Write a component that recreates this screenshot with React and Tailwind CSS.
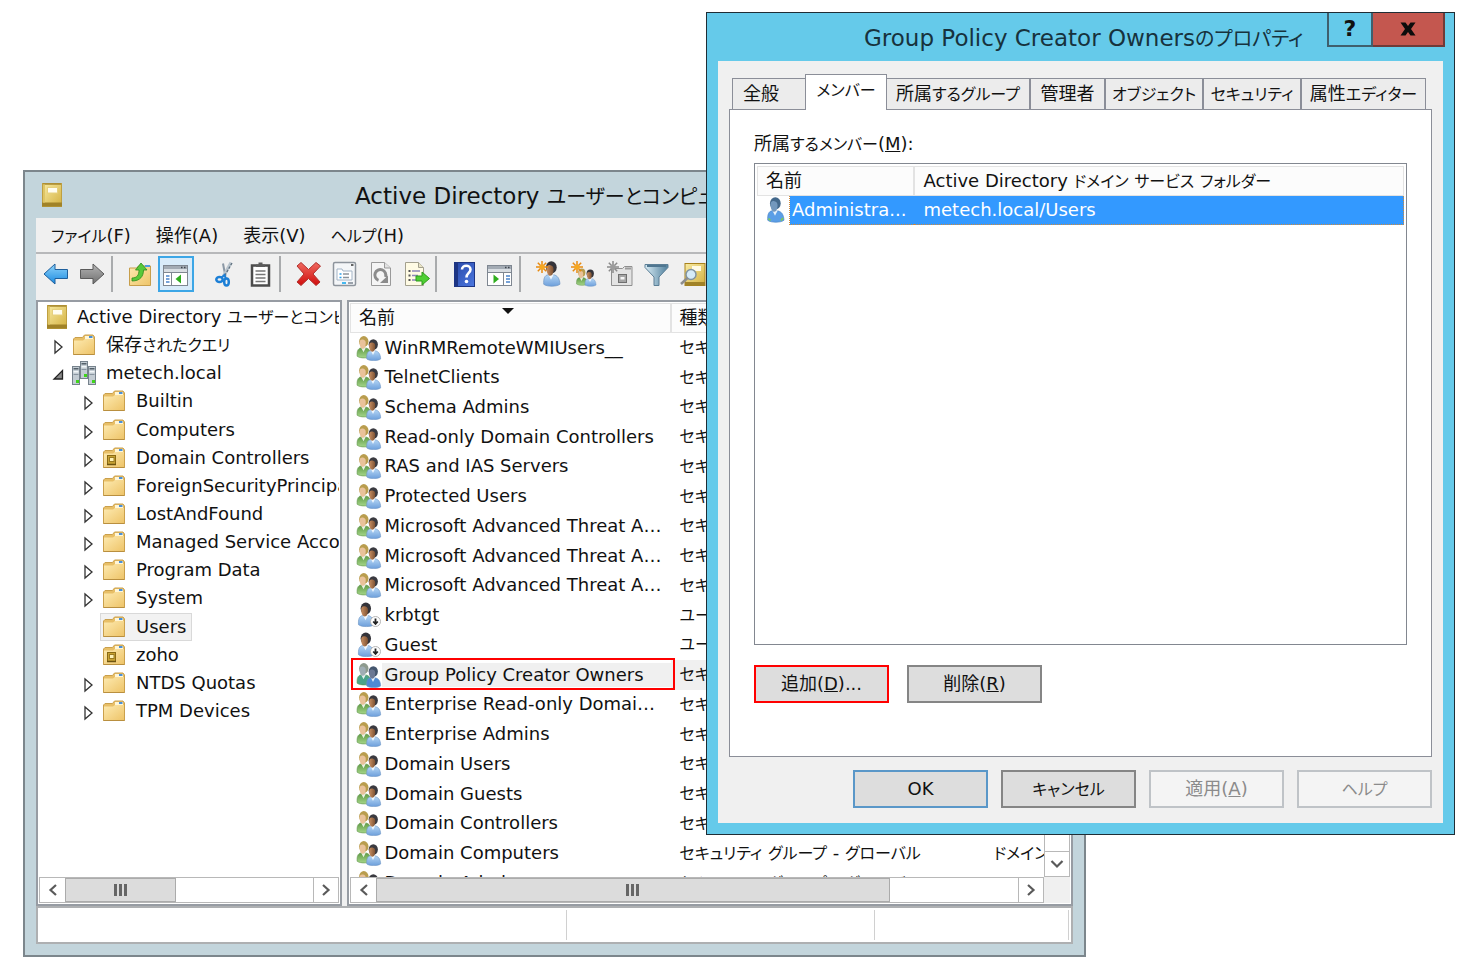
import React from "react";

const FONT = "font-['DejaVu_Sans','Noto_Sans_CJK_JP',sans-serif] [font-feature-settings:'palt']";

// Kana runs are set a step smaller than the Latin and kanji around them.
function Jp({ text, kana = "text-[16px]" }) {
  return text.split(/([\u3040-\u30ff]+)/).map((part, i) =>
    i % 2 ? (
      <span key={i} className={kana}>
        {part}
      </span>
    ) : (
      part
    )
  );
}

function Defs() {
  return (
    <svg className="absolute h-0 w-0" aria-hidden="true">
      <defs>
        <linearGradient id="folder" x1="0" y1="0" x2="1" y2="1">
          <stop offset="0" stopColor="#fdeab0" />
          <stop offset="1" stopColor="#eec469" />
        </linearGradient>
        <linearGradient id="gold" x1="0" y1="0" x2="1" y2="1">
          <stop offset="0" stopColor="#f8eba2" />
          <stop offset="1" stopColor="#d3b040" />
        </linearGradient>
        <linearGradient id="blueArrow" x1="0" y1="0" x2="0" y2="1">
          <stop offset="0" stopColor="#8fd4fb" />
          <stop offset="1" stopColor="#1a8ae0" />
        </linearGradient>
        <linearGradient id="grayArrow" x1="0" y1="0" x2="0" y2="1">
          <stop offset="0" stopColor="#b4b4b4" />
          <stop offset="1" stopColor="#707070" />
        </linearGradient>
        <linearGradient id="redX" x1="0" y1="0" x2="0" y2="1">
          <stop offset="0" stopColor="#f06a60" />
          <stop offset="1" stopColor="#d00c0c" />
        </linearGradient>
        <linearGradient id="blueBody" x1="0" y1="0" x2="0" y2="1">
          <stop offset="0" stopColor="#b5d6f5" />
          <stop offset="1" stopColor="#6d9fdb" />
        </linearGradient>
        <linearGradient id="greenBody" x1="0" y1="0" x2="0" y2="1">
          <stop offset="0" stopColor="#5f9a45" />
          <stop offset="1" stopColor="#a5d689" />
        </linearGradient>
        <linearGradient id="skin" x1="0" y1="0" x2="1" y2="0">
          <stop offset="0" stopColor="#c98f62" />
          <stop offset="1" stopColor="#7d5233" />
        </linearGradient>
        <linearGradient id="steel" x1="0" y1="0" x2="1" y2="0">
          <stop offset="0" stopColor="#d9ecf5" />
          <stop offset="1" stopColor="#4f7f9c" />
        </linearGradient>
        <linearGradient id="helpBlue" x1="0" y1="0" x2="1" y2="1">
          <stop offset="0" stopColor="#2748a8" />
          <stop offset="1" stopColor="#4d78e0" />
        </linearGradient>
      </defs>
    </svg>
  );
}

function BookIcon() {
  return (
    <svg width="20" height="24" viewBox="0 0 20 24" className="shrink-0" aria-hidden="true">
      <rect x="0.5" y="0.5" width="19" height="23" fill="url(#gold)" stroke="#bfa040" />
      <path d="M1 1h18" stroke="#a88a30" strokeWidth="1.5" />
      <rect x="0" y="19.500" width="20" height="4" fill="#a08228" />
      <rect x="1" y="1.500" width="2" height="18" fill="#dfc566" />
      <rect x="5.500" y="4.500" width="10" height="5.500" fill="#fffdf0" stroke="#e6d07e" />
    </svg>
  );
}

function FolderIcon({ ou }) {
  return (
    <svg width="24" height="22" viewBox="0 0 24 22" className="shrink-0" aria-hidden="true">
      <path d="M1.500 5l1.500-1.500h7.500l2-2.500h8.500l1.500 2v17.500H1.500z" fill="#e8bf67" stroke="#caa04c" />
      <rect x="13" y="2" width="8" height="3" fill="#fff6d8" />
      <rect x="17" y="2" width="3.500" height="2" fill="#4a90d8" />
      <path d="M2 6.500h9l2-1.500h9V20H2z" fill="url(#folder)" />
      <path d="M1.500 20.500h21" stroke="#b98f3f" />
      {ou && (
        <g>
          <rect x="5.500" y="8.500" width="8" height="9" fill="#c8a233" stroke="#8a6a14" />
          <path d="M5 17.500h9" stroke="#6e5410" strokeWidth="1.500" />
          <rect x="7.500" y="10.500" width="4.500" height="4" fill="#fff3b8" stroke="#9a7a22" />
        </g>
      )}
    </svg>
  );
}

function DomainIcon() {
  const tower = (x, y, h) => (
    <g key={x}>
      <rect x={x + 0.5} y={y + 0.5} width="7" height={h} fill="#c3ccd3" stroke="#76828c" />
      <rect x={x + 1.5} y={y + 2} width="5" height="1.500" fill="#54606a" />
      <rect x={x + 1.5} y={y + 5} width="5" height="1.500" fill="#f2f6f8" />
      <rect x={x + 1.5} y={y + 8} width="5" height="1" fill="#8995a0" />
      <rect x={x + 4} y={y + h - 4} width="3" height="3" fill="#3fd51a" />
    </g>
  );
  return (
    <svg width="24" height="24" viewBox="0 0 24 24" className="shrink-0" aria-hidden="true">
      {tower(8, 0, 17)}
      {tower(0, 5, 18)}
      {tower(16, 5, 18)}
    </svg>
  );
}

function Person({ body = "url(#blueBody)", hair = "#34343a", face = "url(#skin)", edge = "#6b93c4" }) {
  return (
    <g>
      <path d="M-6.500 14.500c-.3-4.500 .5-8 4-8.500h4.500c3.800 .5 5.800 3.500 6 8.500-2.500 2.200-11.500 2.500-14.500 0z" fill={body} stroke={edge} strokeWidth="0.6" />
      <path d="M-2.500 5.500l2.500 5 2.500-5z" fill="#fff" fillOpacity="0.85" />
      <ellipse cx="0.300" cy="-0.500" rx="4.800" ry="5.500" fill={hair} />
      <path d="M-4 0.500c0-2.500 1.500-3.500 3.500-3 1.800 .4 2.800 1.500 2.800 3.500 0 3.500-1 6-3 6s-3.300-3-3.300-6.500z" fill={face} />
    </g>
  );
}

function GroupIcon({ selected }) {
  return (
    <svg width="26" height="26" viewBox="0 0 26 26" className="shrink-0" aria-hidden="true">
      <g transform="translate(7.500 7) scale(0.980)">
        <Person
          body={selected ? "#4ba389" : "url(#greenBody)"}
          hair={selected ? "#8e9a8e" : "#b99d4e"}
          face={selected ? "#a0aeb4" : "#e9c29a"}
          edge="#5b8f45"
        />
      </g>
      <g transform="translate(17 10) scale(0.960)">
        <Person
          body={selected ? "#4f8ad2" : "url(#blueBody)"}
          hair={selected ? "#45566e" : "#3a3a40"}
          face={selected ? "#6b7894" : "url(#skin)"}
        />
      </g>
    </svg>
  );
}

function UserIcon() {
  return (
    <svg width="26" height="26" viewBox="0 0 26 26" className="shrink-0" aria-hidden="true">
      <g transform="translate(9.500 7) scale(1.080)">
        <Person />
      </g>
      <circle cx="19.500" cy="19.500" r="5" fill="#fff" stroke="#b5b5b5" />
      <path d="M19.500 16.500v5M17.200 19.500l2.300 2.500 2.300-2.500" fill="none" stroke="#222" strokeWidth="1.800" />
    </svg>
  );
}

function SelectedUserIcon() {
  return (
    <svg width="20" height="26" viewBox="0 0 20 26" className="shrink-0" aria-hidden="true">
      <g transform="translate(9 7) scale(1.120)">
        <Person body="#5b9ee6" hair="#44698c" face="#7398bd" edge="#4c86c8" />
      </g>
      <path d="M2.500 21.500l2 2M17 21l-2 2.500" stroke="#7ed04a" strokeWidth="1.500" />
    </svg>
  );
}

function Burst({ fill = "#f6a821", stroke = "#e88a10" }) {
  return (
    <g stroke={stroke} strokeWidth="1.500">
      <path d="M6 0v12M0 6h12M1.800 1.800l8.400 8.400M10.200 1.800l-8.400 8.400" />
      <circle cx="6" cy="6" r="2.600" fill={fill} stroke="none" />
    </g>
  );
}

function Svg({ children }) {
  return (
    <svg width="28" height="28" viewBox="0 0 28 28" aria-hidden="true">
      {children}
    </svg>
  );
}

function MiniWindow({ right }) {
  return (
    <g>
      <rect x="1.500" y="5.500" width="24" height="20" fill="#fff" stroke="#7f8791" />
      <rect x="2" y="6" width="23" height="3" fill="#a3abb4" />
      <path d="M19 7.500h1.500M22 7.500h1.500" stroke="#3d444c" strokeWidth="1.500" />
      <rect x="2" y="9" width="23" height="3" fill="#d9dee3" />
      <path d="M1.500 12.500h24" stroke="#7f8791" />
      {right ? (
        <g>
          <path d="M17.500 12.500v13" stroke="#7f8791" />
          <path d="M20 16h4M20 19h4M20 22h4" stroke="#4a84cc" strokeWidth="1.500" />
          <path d="M7.500 14.500l5.500 4.500-5.500 4.500z" fill="#2fae1e" />
        </g>
      ) : (
        <g>
          <path d="M9.500 12.500v13" stroke="#7f8791" />
          <path d="M4 16h3.500M4 19h3.500M4 22h3.500" stroke="#4a84cc" strokeWidth="1.500" />
          <path d="M19 14.500l-5.500 4.500 5.500 4.500z" fill="#2fae1e" />
        </g>
      )}
    </g>
  );
}

const icons = {
  back: (
    <Svg>
      <path d="M2 14L13 4v5.500h12.500v9H13V24z" fill="url(#blueArrow)" stroke="#1e5f9c" strokeLinejoin="round" />
    </Svg>
  ),
  forward: (
    <Svg>
      <path d="M26 14L15 4v5.500H2.500v9H15V24z" fill="url(#grayArrow)" stroke="#5a5a5a" strokeLinejoin="round" />
    </Svg>
  ),
  up: (
    <Svg>
      <path d="M3.500 8h7l2-2h12v19.500h-21z" fill="url(#folder)" stroke="#c79e4b" />
      <path d="M19 6h5" stroke="#4f9be0" strokeWidth="2" />
      <path d="M6 18c5 0 7-3 7-8H9.500l5.500-7 6 7h-3.500c0 6-3 11-11.500 11z" fill="#57c93a" stroke="#2c8c1a" strokeWidth="0.8" />
    </Svg>
  ),
  tree: (
    <Svg>
      <MiniWindow />
    </Svg>
  ),
  cut: (
    <Svg>
      <path d="M13 3.500l2.500 13" stroke="#8b98a5" strokeWidth="2" />
      <path d="M21 2.500l-7.500 13.500" stroke="#b9c4cd" strokeWidth="3" />
      <path d="M22 3l-8 14" stroke="#5f7180" strokeWidth="1.300" strokeDasharray="2.500 1.500" />
      <ellipse cx="9.500" cy="19.500" rx="3.200" ry="2.600" fill="none" stroke="#1c7fd6" strokeWidth="2.500" />
      <ellipse cx="16.500" cy="22" rx="2.300" ry="3.500" fill="none" stroke="#1c7fd6" strokeWidth="2.500" />
      <path d="M11.500 17.500l3-2.500 1.500 4" fill="none" stroke="#1c7fd6" strokeWidth="2" />
    </Svg>
  ),
  paste: (
    <Svg>
      <rect x="6" y="5.500" width="17" height="20" fill="#fff" stroke="#4c4c4c" strokeWidth="2.500" />
      <path d="M10 7V4.500h2.500V2.500h4v2H19V7z" fill="#5c5c5c" />
      <path d="M9.500 11h10M9.500 14.500h10M9.500 18h10M9.500 21.500h10" stroke="#777" strokeWidth="1.300" />
    </Svg>
  ),
  remove: (
    <Svg>
      <path d="M3 6l4-3.500 7.500 7L22 2.500 26.500 6 19 14l7 8-4 3.500-7.500-7-7.500 7L3 22l7-8z" fill="url(#redX)" stroke="#b0302c" strokeLinejoin="round" />
    </Svg>
  ),
  props: (
    <Svg>
      <rect x="3.500" y="2.500" width="22" height="23" rx="1.500" fill="#f4f6f8" stroke="#8d949c" strokeWidth="1.500" />
      <path d="M21 5h2.500" stroke="#333" strokeWidth="1.500" />
      <path d="M7 20V9h5l1 2h9v9z" fill="#fff" stroke="#a3b4c6" />
      <path d="M9.500 14h2M9.500 17.500h2" stroke="#2f9ee8" strokeWidth="1.500" />
      <path d="M13 14h6M13 17.500h6" stroke="#8d949c" strokeWidth="1.500" />
      <path d="M12 23h4" stroke="#44b8f0" strokeWidth="2" />
      <path d="M18 23h5" stroke="#9aa2ab" strokeWidth="2" />
    </Svg>
  ),
  refresh: (
    <Svg>
      <path d="M5.500 2.500h13l6 5.500v17.500h-19z" fill="#f5f5f5" stroke="#9a9a9a" />
      <path d="M18.500 2.500V8h6" fill="#e2e2e2" stroke="#9a9a9a" />
      <path d="M12.500 20.300a5.500 5.500 0 1 1 7-3.300" fill="none" stroke="#8c8c8c" strokeWidth="3" />
      <path d="M22 15.500v7.500h-8z" fill="#8c8c8c" />
    </Svg>
  ),
  exportList: (
    <Svg>
      <path d="M3.500 2.500h13l5 5v18h-18z" fill="#fffbe4" stroke="#a3a08e" />
      <path d="M16.500 2.500v5h5" fill="#e9e4c6" stroke="#a3a08e" />
      <path d="M6.500 11h2M6.500 15.500h2M6.500 20h2" stroke="#555" strokeWidth="2" />
      <path d="M10 11h8M10 15.500h6M10 20h5" stroke="#8d87b8" strokeWidth="1.500" />
      <path d="M14 16h6v-4l7.500 6.500L20 25v-4h-6z" fill="#4fcf33" stroke="#2f9c1c" />
    </Svg>
  ),
  help: (
    <Svg>
      <rect x="4.500" y="2.500" width="20" height="24" fill="url(#helpBlue)" stroke="#1d3584" />
      <rect x="5" y="3" width="3" height="23" fill="#1d3584" />
      <path d="M12 9.500c0-5 8.500-5 8.500 0 0 3.500-4 3.500-4 8" fill="none" stroke="#fff" strokeWidth="2.600" />
      <circle cx="16.500" cy="21.500" r="1.800" fill="#fff" />
    </Svg>
  ),
  action: (
    <Svg>
      <MiniWindow right />
    </Svg>
  ),
  newUser: (
    <Svg>
      <g transform="translate(17 8) scale(1.120)">
        <Person />
      </g>
      <g transform="translate(2 1)">
        <Burst />
      </g>
    </Svg>
  ),
  newGroup: (
    <Svg>
      <g transform="translate(11.500 13) scale(0.760)">
        <Person body="url(#greenBody)" hair="#b99d4e" face="#e9c29a" edge="#5b8f45" />
      </g>
      <g transform="translate(20 14) scale(0.760)">
        <Person />
      </g>
      <g transform="translate(1 1)">
        <Burst />
      </g>
    </Svg>
  ),
  newOu: (
    <Svg>
      <path d="M5.500 8.500h11l2-2h7.500v19H5.500z" fill="#e3e3e3" stroke="#8f8f8f" />
      <path d="M19 8.500h6" stroke="#9c9c9c" strokeWidth="2" />
      <rect x="12.500" y="14.500" width="8" height="8" fill="#a5a5a5" stroke="#6f6f6f" />
      <rect x="14.500" y="17" width="4" height="2.500" fill="#f5f5f5" />
      <g transform="translate(1 1)">
        <Burst fill="#9c9c9c" stroke="#8a8a8a" />
      </g>
    </Svg>
  ),
  filter: (
    <Svg>
      <path d="M3 4.500h23v3l-9 9.500v8.500h-5V17L3 7.500z" fill="url(#steel)" stroke="#5c7f96" />
      <path d="M5 6h19" stroke="#4f7690" strokeWidth="2" />
    </Svg>
  ),
  find: (
    <Svg>
      <rect x="7" y="3.500" width="20" height="22" fill="url(#gold)" stroke="#a8821c" />
      <rect x="7" y="22" width="20" height="3.500" fill="#a08228" />
      <rect x="14" y="6" width="9" height="5" fill="#fffbe6" />
      <circle cx="13" cy="14.500" r="5" fill="#d6ebf8" stroke="#8193a0" strokeWidth="1.500" />
      <path d="M9.500 18l-6.500 6" stroke="#8d8d8d" strokeWidth="2.500" />
    </Svg>
  ),
};

function Tool({ icon, label, active, gap }) {
  return (
    <button
      type="button"
      aria-label={label}
      className={`flex h-9 w-9 shrink-0 items-center justify-center ${active ? "border-2 border-[#3ca6e6] bg-[#d9ebf9]" : ""} ${gap ? "mr-3" : ""}`}
    >
      {icons[icon]}
    </button>
  );
}

const Sep = () => <span className="mr-[9px] ml-px h-9 w-0.5 shrink-0 bg-[#a9abad]" />;

const tree = [
  { label: "Active Directory ユーザーとコンピューター", icon: "root", level: 0 },
  { label: "保存されたクエリ", icon: "folder", level: 1, arrow: "closed" },
  { label: "metech.local", icon: "domain", level: 1, arrow: "open" },
  { label: "Builtin", icon: "folder", level: 2, arrow: "closed" },
  { label: "Computers", icon: "folder", level: 2, arrow: "closed" },
  { label: "Domain Controllers", icon: "ou", level: 2, arrow: "closed" },
  { label: "ForeignSecurityPrincipals", icon: "folder", level: 2, arrow: "closed" },
  { label: "LostAndFound", icon: "folder", level: 2, arrow: "closed" },
  { label: "Managed Service Accounts", icon: "folder", level: 2, arrow: "closed" },
  { label: "Program Data", icon: "folder", level: 2, arrow: "closed" },
  { label: "System", icon: "folder", level: 2, arrow: "closed" },
  { label: "Users", icon: "folder", level: 2, selected: true },
  { label: "zoho", icon: "ou", level: 2 },
  { label: "NTDS Quotas", icon: "folder", level: 2, arrow: "closed" },
  { label: "TPM Devices", icon: "folder", level: 2, arrow: "closed" },
];

const indent = ["pl-0.5", "pl-[9px]", "pl-[39px]"];

function Arrow({ state }) {
  return (
    <svg width="20" height="20" viewBox="0 0 20 20" className="shrink-0" aria-hidden="true">
      {state === "closed" && <path d="M7 6v12l7-6z" fill="#fff" stroke="#333" strokeWidth="1.300" />}
      {state === "open" && <path d="M14.500 7.500V16H6z" fill="#888" stroke="#222" strokeWidth="1.300" />}
    </svg>
  );
}

function TreeItem({ item }) {
  return (
    <li className={`flex items-center ${indent[item.level]}`}>
      {item.level > 0 && <Arrow state={item.arrow} />}
      <span
        className={`ml-0.5 flex h-7 items-center border pr-[5px] pl-px whitespace-nowrap ${item.selected ? "border-[#d9d9d9] bg-[#f2f2f2]" : "border-transparent"}`}
      >
        <span className="flex w-6 shrink-0 justify-center">
          {item.icon === "root" && <BookIcon />}
          {item.icon === "domain" && <DomainIcon />}
          {item.icon === "folder" && <FolderIcon />}
          {item.icon === "ou" && <FolderIcon ou />}
        </span>
        <span className={item.level ? "ml-2.5" : "ml-2"}>
          <Jp text={item.label} />
        </span>
      </span>
    </li>
  );
}

const GROUP = "セキュリティ グループ - グローバル";
const LOCAL = "セキュリティ グループ - ドメイン ローカル";
const rows = [
  ["WinRMRemoteWMIUsers__", LOCAL],
  ["TelnetClients", LOCAL],
  ["Schema Admins", GROUP],
  ["Read-only Domain Controllers", GROUP],
  ["RAS and IAS Servers", LOCAL],
  ["Protected Users", GROUP],
  ["Microsoft Advanced Threat Analytics", LOCAL],
  ["Microsoft Advanced Threat Analytics", LOCAL],
  ["Microsoft Advanced Threat Analytics", LOCAL],
  ["krbtgt", "ユーザー"],
  ["Guest", "ユーザー"],
  ["Group Policy Creator Owners", GROUP],
  ["Enterprise Read-only Domain Controllers", GROUP],
  ["Enterprise Admins", GROUP],
  ["Domain Users", GROUP],
  ["Domain Guests", GROUP],
  ["Domain Controllers", GROUP],
  ["Domain Computers", GROUP],
  ["Domain Admins", GROUP],
];

function Chevron({ d }) {
  return (
    <svg width="12" height="14" viewBox="0 0 12 14" aria-hidden="true">
      <path d={d} fill="none" stroke="#5a5a5a" strokeWidth="2.200" />
    </svg>
  );
}

function HScroll({ thumb }) {
  return (
    <div className="flex h-[26px] min-w-0 flex-1 border border-[#b8b8b8] bg-white">
      <button type="button" aria-label="左へスクロール" className="flex w-[25px] shrink-0 items-center justify-center">
        <Chevron d="M9 2L3.500 7 9 12" />
      </button>
      <div className="flex min-w-0 flex-1">
        <div className={`flex items-center justify-center gap-0.5 border border-[#ababab] bg-[#dcdcdc] ${thumb}`}>
          <i className="h-3 w-[3px] bg-[#666]" />
          <i className="h-3 w-[3px] bg-[#666]" />
          <i className="h-3 w-[3px] bg-[#666]" />
        </div>
      </div>
      <button type="button" aria-label="右へスクロール" className="flex w-[25px] shrink-0 items-center justify-center border-l border-[#b8b8b8]">
        <Chevron d="M3 2l5.500 5L3 12" />
      </button>
    </div>
  );
}

function NameCell({ name }) {
  const user = name === "krbtgt" || name === "Guest";
  const picked = name === "Group Policy Creator Owners";
  return (
    <td className="relative p-0">
      <div className="flex items-center pl-[5px]">
        {user ? <UserIcon /> : <GroupIcon selected={picked} />}
        <span className={`min-w-0 flex-1 truncate pr-1 pl-[3px] ${picked ? "bg-[#f0f0f0]" : ""}`}>{name}</span>
      </div>
      {picked && <span className="absolute -top-0.5 -right-1 bottom-0 left-0 border-2 border-[#ff0000]" />}
    </td>
  );
}

function DirectoryWindow() {
  return (
    <section className="col-start-1 row-start-1 mt-[170px] mr-[389px] ml-[23px] self-start border-2 border-[#7c868c] bg-[#c3d5dc] px-[11px] pb-[11px]">
      <header className="flex h-[46px] items-center">
        <span className="ml-1.5">
          <BookIcon />
        </span>
        <h1 className="min-w-0 flex-1 pt-0.5 pl-[293px] text-[23px] whitespace-nowrap">
          <Jp text="Active Directory ユーザーとコンピューター" kana="text-[20px]" />
        </h1>
      </header>
      <div className="bg-[#f0f0f0]">
        <nav className="flex h-9 items-center gap-[25px] border-b-2 border-[#b7b8ba] pt-0.5 pl-[15px]">
          {["ファイル(F)", "操作(A)", "表示(V)", "ヘルプ(H)"].map((label) => (
            <button key={label} type="button">
              <Jp text={label} />
            </button>
          ))}
        </nav>
        <div className="flex h-[46px] items-start overflow-hidden pt-0.5 pl-0.5">
          <Tool icon="back" label="戻る" />
          <Tool icon="forward" label="進む" />
          <Sep />
          <Tool icon="up" label="1 つ上のレベルへ" />
          <Tool icon="tree" label="コンソール ツリーの表示" active gap />
          <Tool icon="cut" label="切り取り" />
          <Tool icon="paste" label="貼り付け" />
          <Sep />
          <Tool icon="remove" label="削除" />
          <Tool icon="props" label="プロパティ" />
          <Tool icon="refresh" label="最新の情報に更新" />
          <Tool icon="exportList" label="一覧のエクスポート" />
          <Sep />
          <Tool icon="help" label="ヘルプ" />
          <Tool icon="action" label="操作ウィンドウの表示" />
          <Sep />
          <Tool icon="newUser" label="新しいユーザー" />
          <Tool icon="newGroup" label="新しいグループ" />
          <Tool icon="newOu" label="新しい組織単位" />
          <Tool icon="filter" label="フィルター" />
          <Tool icon="find" label="検索" />
        </div>
        <div className="flex gap-[5px]">
          <div className="flex w-[306px] shrink-0 flex-col justify-between border-2 border-[#979ca3] bg-white p-px">
            <ul className="grid h-[422px] auto-rows-fr overflow-hidden">
              {tree.map((item) => (
                <TreeItem key={item.label} item={item} />
              ))}
            </ul>
            <div className="flex">
              <HScroll thumb="w-[111px]" />
            </div>
          </div>
          <div className="min-w-0 flex-1 border-2 border-[#979ca3] bg-white p-px">
            <div className="flex h-[574px]">
              <div className="min-w-0 flex-1 overflow-hidden">
                <table className="h-[595px] w-full table-fixed border-collapse whitespace-nowrap">
                  <colgroup>
                    <col className="w-[320px]" />
                    <col className="w-[314px]" />
                    <col />
                  </colgroup>
                  <thead>
                    <tr className="h-[29px] bg-[#fcfcfc]">
                      <th className="relative border border-r-2 border-[#e3e3e3] p-0 pl-2 text-left font-normal">
                        名前
                        <svg width="12" height="6" viewBox="0 0 12 6" className="absolute top-1 left-1/2 -ml-2" aria-hidden="true">
                          <path d="M0 0h12L6 6z" fill="#111" />
                        </svg>
                      </th>
                      <th className="border border-r-2 border-[#e3e3e3] p-0 pl-2 text-left font-normal">種類</th>
                      <th className="border border-[#e3e3e3] p-0 pl-2 text-left font-normal">説明</th>
                    </tr>
                  </thead>
                  <tbody>
                    {rows.map(([name, type], i) => {
                      const bg = name === "Group Policy Creator Owners" ? "bg-[#f0f0f0]" : "";
                      return (
                        <tr key={i} className="h-7">
                          <NameCell name={name} />
                          <td className={`p-0 pl-[9px] ${bg}`}>
                            <Jp text={type} />
                          </td>
                          <td className={`p-0 pl-[9px] ${bg}`}>
                            <Jp text="ドメイン" />
                          </td>
                        </tr>
                      );
                    })}
                  </tbody>
                </table>
              </div>
              <div className="flex w-[26px] shrink-0 flex-col justify-end border border-[#b8b8b8]">
                <button type="button" aria-label="下へスクロール" className="flex h-[25px] items-center justify-center border-t border-[#b8b8b8]">
                  <svg width="14" height="12" viewBox="0 0 14 12" aria-hidden="true">
                    <path d="M1.500 3L7 8.500 12.500 3" fill="none" stroke="#5a5a5a" strokeWidth="2.200" />
                  </svg>
                </button>
              </div>
            </div>
            <div className="flex bg-[#f0f0f0] pr-[26px]">
              <HScroll thumb="w-4/5" />
            </div>
          </div>
        </div>
        <footer className="flex h-[38px] border-2 border-[#aeb0b2] bg-white py-0.5">
          <span className="w-[529px] border-r border-[#d0d0d0]" />
          <span className="w-[308px] border-r border-[#d0d0d0]" />
          <span className="mr-0.5 flex-1 border-r border-[#d0d0d0]" />
        </footer>
      </div>
    </section>
  );
}

const tabs = [
  ["全般", "w-[73px] border-r-0 pr-4"],
  ["メンバー", "w-[82px]"],
  ["所属するグループ", "w-[144px] border-r-2 border-l-0"],
  ["管理者", "w-[75px] border-r-2 border-l-0"],
  ["オブジェクト", "w-[98px] border-r-2 border-l-0"],
  ["セキュリティ", "w-[98px] border-r-2 border-l-0"],
  ["属性エディター", "w-[124px] border-l-0"],
];

function Tab({ label, size, selected }) {
  const look = selected ? "-mb-px h-9 bg-white pb-1" : "h-[31px] bg-[#ececec]";
  return (
    <button
      type="button"
      role="tab"
      aria-selected={selected}
      className={`shrink-0 border border-b-0 border-[#8b8e98] whitespace-nowrap ${look} ${size}`}
    >
      <Jp text={label} />
    </button>
  );
}

function PushButton({ children, tone = "normal", disabled }) {
  const tones = {
    normal: "border-[#858585] bg-[#dddddd]",
    primary: "border-[#5a97c8] bg-[#dddddd]",
    marked: "border-[#ff0000] bg-[#dddddd]",
    disabled: "border-[#bfc3c7] bg-[#f4f4f4] text-[#8b8b8b]",
  };
  return (
    <button type="button" disabled={disabled} className={`h-[38px] w-[135px] border-2 ${tones[disabled ? "disabled" : tone]}`}>
      {children}
    </button>
  );
}

function PropertiesDialog() {
  return (
    <section
      role="dialog"
      aria-labelledby="dialog-title"
      className="z-10 col-start-1 row-start-1 mt-3 mr-5 ml-[706px] self-start border border-[#1f2d35] bg-[#65caea] px-[11px] pb-[11px]"
    >
      <header className="flex h-12 items-start">
        <h2 id="dialog-title" className="flex-1 self-center pt-0.5 pl-[146px] text-[23px] whitespace-nowrap text-[#17323d]">
          <Jp text="Group Policy Creator Ownersのプロパティ" kana="text-[20px]" />
        </h2>
        <button type="button" aria-label="ヘルプ" className="h-[34px] w-[46px] border-2 border-t-0 border-[#3f5f6d] text-[22px] leading-7 font-bold">
          ?
        </button>
        <button type="button" aria-label="閉じる" className="-mr-0.5 flex h-[34px] w-[72px] items-center justify-center border-2 border-t-0 border-l-0 border-[#6f3a38] bg-[#c4574f]">
          <svg width="16" height="14" viewBox="0 0 16 14" aria-hidden="true">
            <path d="M0.500 0.500h5L8 4l2.500-3.500h5L11 7l4.500 6.500h-5L8 10l-2.500 3.500h-5L5 7z" fill="#0c0c0c" />
          </svg>
        </button>
      </header>
      <div className="bg-[#f0f0f0] px-[11px] pt-[13px] pb-[15px]">
        <div role="tablist" className="relative flex items-end pl-[3px]">
          {tabs.map(([label, size], i) => (
            <Tab key={label} label={label} size={size} selected={i === 1} />
          ))}
        </div>
        <div role="tabpanel" className="flex flex-col border border-[#8b8e98] bg-white px-6 pt-[18px] pb-[53px]">
          <p id="members-label" className="leading-8">
            <Jp text="所属するメンバー" />(<u>M</u>):
          </p>
          <div className="mt-0.5 h-[482px] border border-[#828790] p-0.5">
            <table aria-labelledby="members-label" className="w-full table-fixed border-collapse whitespace-nowrap">
              <colgroup>
                <col className="w-8" />
                <col className="w-[124px]" />
                <col />
              </colgroup>
              <thead>
                <tr className="h-[29px] bg-[#fcfcfc]">
                  <th colSpan={2} className="border border-r-2 border-[#e3e3e3] p-0 pl-2 text-left font-normal">
                    名前
                  </th>
                  <th className="border border-[#e3e3e3] p-0 pl-[9px] text-left font-normal">
                    <Jp text="Active Directory ドメイン サービス フォルダー" />
                  </th>
                </tr>
              </thead>
              <tbody>
                <tr className="h-[29px]">
                  <td className="p-0 pl-2">
                    <SelectedUserIcon />
                  </td>
                  <td className="border border-r-0 border-dotted border-[#d08a3c] bg-[#3399ff] p-0 pl-0.5 text-white">Administra...</td>
                  <td className="border border-l-0 border-dotted border-[#d08a3c] bg-[#3399ff] p-0 pl-2.5 text-white">metech.local/Users</td>
                </tr>
              </tbody>
            </table>
          </div>
          <div className="mt-5 flex gap-[18px]">
            <PushButton tone="marked">
              追加(<u>D</u>)...
            </PushButton>
            <PushButton>
              削除(<u>R</u>)
            </PushButton>
          </div>
        </div>
        <div className="mt-[13px] flex justify-end gap-[13px]">
          <PushButton tone="primary">OK</PushButton>
          <PushButton>
            <Jp text="キャンセル" />
          </PushButton>
          <PushButton disabled>
            適用(<u>A</u>)
          </PushButton>
          <PushButton disabled>
            <Jp text="ヘルプ" />
          </PushButton>
        </div>
      </div>
    </section>
  );
}

export default function App() {
  return (
    <main className={`grid min-h-screen grid-cols-1 overflow-hidden bg-white text-[18px] leading-6 text-[#111] ${FONT}`}>
      <Defs />
      <DirectoryWindow />
      <PropertiesDialog />
    </main>
  );
}
